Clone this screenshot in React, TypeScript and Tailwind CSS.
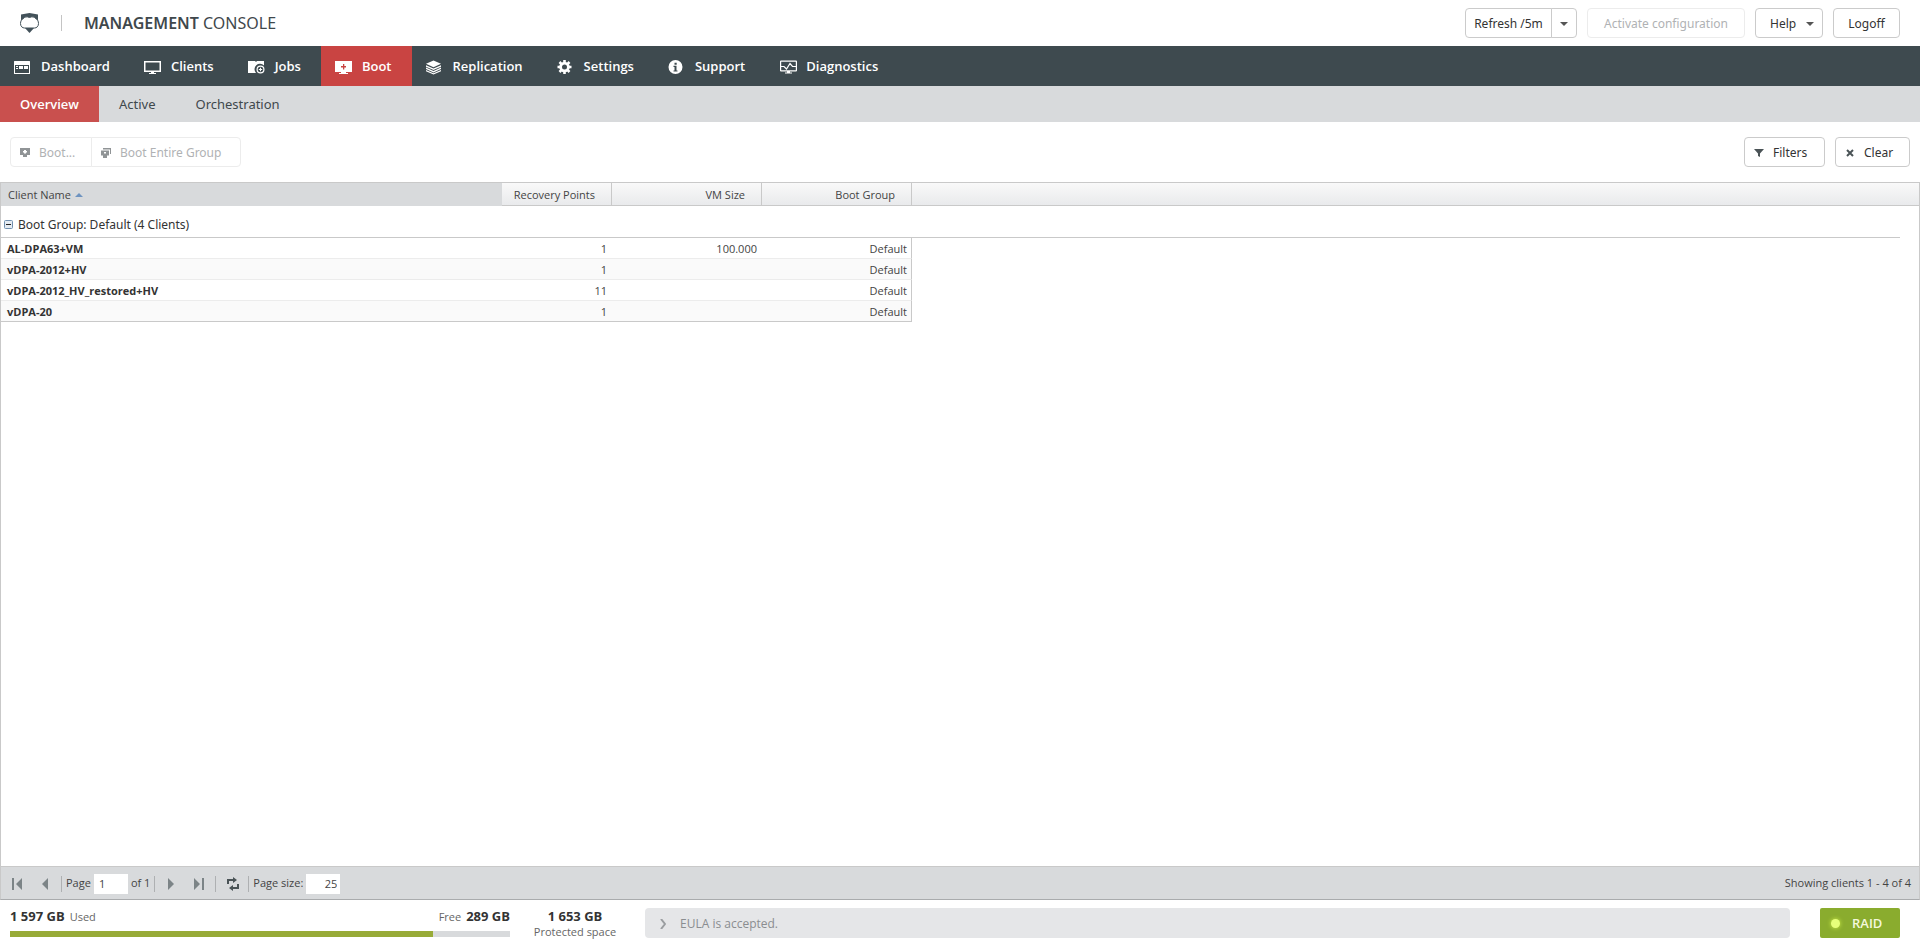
import React from 'react';

interface IconProps {
  children: React.ReactNode;
  w?: number;
  h?: number;
}

const Icon: React.FC<IconProps> = ({ children, w = 18, h = 16 }) => (
  <svg width={w} height={h} viewBox={`0 0 ${w} ${h}`} fill="currentColor" aria-hidden="true" className="shrink-0">
    {children}
  </svg>
);

const DashboardIcon = () => (
  <Icon>
    <path fillRule="evenodd" d="M.5 2h15q.5 0 .5.500V14.500q0 .5-.5.500H.5q-.5 0-.5-.500V2.500Q0 2 .5 2zM1 6v8h14V6zM2 7h2v1H2zM2 9h2v1H2zM5 7h4v3H5zM10 7h4v3h-4z" />
  </Icon>
);

const ClientsIcon = () => (
  <Icon>
    <path fillRule="evenodd" d="M0 2h17v11H0zM1.500 3.500v8h14v-8z" />
    <path d="M7 13h3v1h2v1H5v-1h2z" />
  </Icon>
);

const JobsIcon = () => (
  <Icon>
    <path d="M0 2h7l1 1 1-1h7v4.500a4.800 4.800 0 0 0-8 7.500H0z" />
    <path fillRule="evenodd" d="M12.500 6.500a4 4 0 1 1 0 8a4 4 0 0 1 0-8zm0 1.200a2.800 2.800 0 1 0 0 5.600a2.800 2.800 0 0 0 0-5.600z" />
    <path d="M12 8.800h1v1.200h1.200v1H13v1.200h-1v-1.200h-1.200v-1H12z" />
  </Icon>
);

const BootIcon = () => (
  <Icon>
    <path fillRule="evenodd" d="M0 2h17v11h-6v1h2v1H4v-1h2v-1H0zM8 5v2H6v1.500h2v2h1.300v-2H11V7H9.300V5z" />
  </Icon>
);

const ReplicationIcon = () => (
  <Icon>
    <path d="M7.500 1.500l7.500 3.300-7.500 3.400L0 4.800z" />
    <path d="M0 6.200l7.500 3.400L15 6.200v1.500l-7.500 3.400L0 7.700z" />
    <path d="M0 8.600L7.500 12 15 8.600v1.500l-7.500 3.400L0 10.100z" />
    <path d="M0 11l7.500 3.300L15 11v1.200l-7.500 3.400L0 12.200z" />
  </Icon>
);

const SettingsIcon = () => (
  <Icon>
    <circle cx="7.500" cy="8" r="3.900" fill="none" stroke="currentColor" strokeWidth="2.800" />
    <path stroke="currentColor" strokeWidth="2.600" d="M7.500 1v2.500M7.500 12.500V15M.5 8H3M12 8h2.500M2.500 3l1.800 1.800M10.700 11.200l1.800 1.800M12.500 3l-1.800 1.800M4.300 11.200L2.500 13" />
  </Icon>
);

const SupportIcon = () => (
  <Icon>
    <path fillRule="evenodd" d="M7.500 1a7 7 0 1 1 0 14a7 7 0 0 1 0-14zM6.500 3.700v2h2.200v-2zM5.500 6.800V8h1v3.500h-1v1h4v-1h-1V6.800z" />
  </Icon>
);

const DiagnosticsIcon = () => (
  <Icon>
    <path fillRule="evenodd" d="M2 1.500h15q1 0 1 1v9q0 1-1 1H2q-1 0-1-1v-9q0-1 1-1zM2.200 2.700v8.600h14.600V2.700z" />
    <path d="M8 12h3v1.500h2v1H6v-1h2z" />
    <path d="M2 7.500h3L7.500 10 11 4.500 13.500 7.500H17" fill="none" stroke="currentColor" strokeWidth="1.200" />
  </Icon>
);

const NAV = [
  { label: 'Dashboard', icon: DashboardIcon },
  { label: 'Clients', icon: ClientsIcon },
  { label: 'Jobs', icon: JobsIcon },
  { label: 'Boot', icon: BootIcon, active: true },
  { label: 'Replication', icon: ReplicationIcon },
  { label: 'Settings', icon: SettingsIcon },
  { label: 'Support', icon: SupportIcon },
  { label: 'Diagnostics', icon: DiagnosticsIcon },
];

const TABS = [{ label: 'Overview', active: true }, { label: 'Active' }, { label: 'Orchestration' }];

const CLIENTS = [
  { name: 'AL-DPA63+VM', points: 1, size: '100.000', group: 'Default' },
  { name: 'vDPA-2012+HV', points: 1, size: '', group: 'Default' },
  { name: 'vDPA-2012_HV_restored+HV', points: 11, size: '', group: 'Default' },
  { name: 'vDPA-20', points: 1, size: '', group: 'Default' },
];

const BTN = "flex h-[30px] items-center border border-[#cbcbcb] bg-white pt-px font-['Noto_Sans',sans-serif] text-[12px] text-[#333]";
const BTN_OFF = "flex h-[30px] items-center border border-[#ececec] bg-white pt-px font-['Noto_Sans',sans-serif] text-[12px] text-[#b0b2b4]";

const CaretDown = () => (
  <Icon w={8} h={4}>
    <path fill="#555" d="M0 0h8L4 4z" />
  </Icon>
);

const Header = () => (
  <header className="flex h-[46px] items-center px-5">
    <svg width="19" height="20" viewBox="0 0 19 20" aria-hidden="true">
      <path d="M1 1.500L9.500 0 18 1.500V8H1z" fill="#43525a" />
      <path d="M4.500 14.500h10L9.500 20z" fill="#43525a" />
      <path d="M3.500 5.500C4.500 3.800 7 3.300 9.500 4.500C12 3.300 14.500 3.800 15.500 5.500C17.500 6 18.500 8.500 18.500 10.500C18.500 13.500 16.500 15 14.500 15H4.500C2.500 15 .5 13.500 .5 10.500C.5 8.500 1.500 6 3.500 5.500z" fill="#fff" stroke="#43525a" />
    </svg>
    <div className="mx-[22px] h-4 w-px bg-[#c4c4c4]" />
    <h1 className="font-['Noto_Sans',sans-serif] text-[16px] text-[#3f484c]">
      <span className="font-semibold">MANAGEMENT</span> CONSOLE
    </h1>
    <div className="ml-auto flex gap-[10px]">
      <div className="flex">
        <button className={`${BTN} w-[87px] justify-center rounded-l`}>Refresh /5m</button>
        <button aria-label="Refresh interval" className={`${BTN} -ml-px w-[26px] justify-center rounded-r`}>
          <CaretDown />
        </button>
      </div>
      <button disabled className={`${BTN_OFF} w-[158px] justify-center rounded`}>Activate configuration</button>
      <button className={`${BTN} w-[68px] gap-[10px] rounded pl-[14px]`}>
        Help
        <CaretDown />
      </button>
      <button className={`${BTN} w-[67px] justify-center rounded`}>Logoff</button>
    </div>
  </header>
);

const Toolbar = () => (
  <div className="flex justify-between px-[10px] py-[15px]">
    <div className="flex">
      <button disabled className={`${BTN_OFF} w-[82px] gap-[9px] rounded-l pl-[9px]`}>
        <Icon w={10} h={9}>
          <path fillRule="evenodd" fill="#909496" d="M0 0h10v7H7v2H3V7H0zM4 2v1H3v1l2 2 2-2V3H6V2z" />
        </Icon>
        Boot...
      </button>
      <button disabled className={`${BTN_OFF} -ml-px w-[150px] gap-[9px] rounded-r pl-[9px]`}>
        <Icon w={10} h={10}>
          <path fillRule="evenodd" fill="#909496" d="M2 0h8v6H9V1.500H2zM0 2.500h8v5H6V10H2V7.500H0zM3 4v1l1 1 1-1V4z" />
        </Icon>
        Boot Entire Group
      </button>
    </div>
    <div className="flex gap-[10px]">
      <button className={`${BTN} w-[81px] gap-[9px] rounded pl-[9px]`}>
        <Icon w={10} h={8}>
          <path fill="#4a5356" d="M0 0h10L6 4.500V8L4 7V4.500z" />
        </Icon>
        Filters
      </button>
      <button className={`${BTN} w-[75px] gap-[10px] rounded pl-[10px]`}>
        <Icon w={8} h={8}>
          <path stroke="#4a5356" strokeWidth="2" d="M1 1l6 6M7 1L1 7" />
        </Icon>
        Clear
      </button>
    </div>
  </div>
);

const TH = 'border-r border-b border-[#c9c9c9] bg-linear-to-b from-[#f9f9f9] to-[#e9eaec] pt-0.5 pr-4 text-right font-normal';

const ClientGrid = () => (
  <main className="grow border-x border-t border-[#c9c9c9]">
    <table className="w-full table-fixed border-separate border-spacing-0 text-[11px] text-[#444]">
      <colgroup>
        <col className="w-[501px]" />
        <col className="w-[110px]" />
        <col className="w-[150px]" />
        <col className="w-[150px]" />
        <col />
      </colgroup>
      <thead>
        <tr className="h-[23px]">
          <th className="border-b border-[#d8dadc] bg-[#d8dadc] pt-0.5 pl-[7px] text-left font-normal">
            <span className="flex items-center gap-1">
              Client Name
              <Icon w={8} h={4}>
                <path fill="#6e93c0" d="M4 0l4 4H0z" />
              </Icon>
            </span>
          </th>
          <th className={TH}>Recovery Points</th>
          <th className={TH}>VM Size</th>
          <th className={TH}>Boot Group</th>
          <th className="border-b border-[#c9c9c9] bg-linear-to-b from-[#f9f9f9] to-[#e9eaec]" />
        </tr>
      </thead>
      <tbody>
        <tr className="h-8">
          <td colSpan={5} className="pr-[19px]">
            <div className="flex h-8 items-center gap-[5px] border-b border-[#c9c9c9] pt-[6px] pl-[3px] font-['Noto_Sans',sans-serif] text-[12px] text-[#333]">
              <button aria-label="Collapse group">
                <svg width="9" height="9" viewBox="0 0 9 9" className="block">
                  <rect x=".5" y=".5" width="8" height="8" rx="1" fill="#e4ebf2" stroke="#7190b0" />
                  <path d="M2 4.500h5" stroke="#222" />
                </svg>
              </button>
              Boot Group: Default (4 Clients)
            </div>
          </td>
        </tr>
        {CLIENTS.map((c, i) => {
          const line = i === CLIENTS.length - 1 ? 'border-b-[#c9c9c9]' : 'border-b-[#ececec]';
          const fill = i % 2 ? 'bg-[#fafafa]' : 'bg-white';
          return (
            <tr key={c.name} className="h-[21px]">
              <td className={`border-b pt-0.5 pl-[6px] font-bold text-[#333] ${line} ${fill}`}>{c.name}</td>
              <td className={`border-b pt-0.5 pr-[5px] text-right ${line} ${fill}`}>{c.points}</td>
              <td className={`border-b pt-0.5 pr-[5px] text-right ${line} ${fill}`}>{c.size}</td>
              <td className={`border-r border-b border-r-[#c9c9c9] pt-0.5 pr-1 text-right ${line} ${fill}`}>{c.group}</td>
              <td />
            </tr>
          );
        })}
      </tbody>
    </table>
  </main>
);

const Divider = () => <div className="h-4 w-px bg-[#aeb0b2]" />;

const Pager = () => (
  <div className="flex h-[34px] items-center border border-[#c9c9c9] border-b-[#a9abad] bg-[#d8dadc] pt-px pr-2 pl-[11px] text-[11px] text-[#444]">
    <button aria-label="First page" className="text-[#7c8487]">
      <Icon w={11} h={12}>
        <path d="M0 0h2v12H0zM10 0v12L4 6z" />
      </Icon>
    </button>
    <button aria-label="Previous page" className="ml-[19px] text-[#7c8487]">
      <Icon w={6} h={12}>
        <path d="M6 0v12L0 6z" />
      </Icon>
    </button>
    <div className="ml-[13px]">
      <Divider />
    </div>
    <label htmlFor="page" className="ml-1">Page</label>
    <input id="page" defaultValue="1" className="mx-[3px] h-5 w-[34px] bg-white pl-[5px]" />
    <span className="mr-1">of 1</span>
    <Divider />
    <button aria-label="Next page" className="ml-[13px] text-[#7c8487]">
      <Icon w={6} h={12}>
        <path d="M0 0v12l6-6z" />
      </Icon>
    </button>
    <button aria-label="Last page" className="ml-5 text-[#7c8487]">
      <Icon w={11} h={12}>
        <path d="M0 0v12l6-6zM8 0h2v12H8z" />
      </Icon>
    </button>
    <div className="ml-[10px]">
      <Divider />
    </div>
    <button aria-label="Reload" className="mr-[9px] ml-[11px] text-[#4a5356]">
      <Icon w={12} h={14}>
        <path d="M0 7V2h6V0l4 3-4 3V4H2v3zM12 7v5H6v2l-4-3 4-3v2h4V7z" />
      </Icon>
    </button>
    <Divider />
    <label htmlFor="size" className="ml-1">Page size:</label>
    <input id="size" defaultValue="25" className="ml-[3px] h-5 w-[34px] bg-white pr-[3px] text-right" />
    <span className="ml-auto">Showing clients 1 - 4 of 4</span>
  </div>
);

const StatusBar = () => (
  <footer className="flex h-[46px] items-center pr-5 pl-[10px] text-[11px] text-[#666]">
    <div className="w-[500px] pb-1">
      <div className="flex items-center justify-between leading-5">
        <span><b className="mr-[5px] text-[13px] text-[#333]">1 597 GB</b>Used</span>
        <span>Free<b className="ml-[5px] text-[13px] text-[#333]">289 GB</b></span>
      </div>
      <div className="mt-1 h-[6px] bg-[#d8dadc]">
        <div className="h-full w-[423px] bg-[#98ab38]" />
      </div>
    </div>
    <div className="w-[130px] pt-0.5 text-center leading-4">
      <b className="block text-[13px] text-[#333]">1 653 GB</b>
      Protected space
    </div>
    <div className="mr-[30px] ml-[5px] flex h-[30px] grow items-center gap-[14px] rounded bg-[#e5e6e8] pt-px pl-[15px] text-[12px] text-[#8a8d90]">
      <Icon w={6} h={10}>
        <path d="M1 0l4 5-4 5" fill="none" stroke="#9a9da0" strokeWidth="2" />
      </Icon>
      EULA is accepted.
    </div>
    <button className="flex h-[30px] w-20 items-center gap-3 rounded-xs bg-[#8aac2e] pt-px pl-[11px] text-[13px] font-semibold text-[#f4f8dc]">
      <span className="size-[9px] rounded-full bg-[#e6ff7a] shadow-[0_0_4px_#d2f24a]" />
      RAID
    </button>
  </footer>
);

export default function App() {
  return (
    <div className="flex min-h-screen flex-col bg-white font-['Open_Sans',sans-serif]">
      <Header />
      <nav className="flex h-10 bg-[#3e4a4f]">
        {NAV.map(({ label, icon: NavIcon, active }) => (
          <a
            key={label}
            href="#"
            className={`flex items-center gap-[9px] pt-px pr-5 pl-[14px] text-[13px] font-semibold text-white ${active ? 'bg-[#c94442]' : ''}`}
          >
            <NavIcon />
            {label}
          </a>
        ))}
      </nav>
      <nav className="flex h-9 bg-[#d8dadc]">
        {TABS.map(({ label, active }) => (
          <a
            key={label}
            href="#"
            className={`flex items-center px-5 pt-0.5 text-[13px] ${active ? 'bg-[#c9504e] font-semibold text-white' : "font-['Noto_Sans',sans-serif] text-[#3f484c]"}`}
          >
            {label}
          </a>
        ))}
      </nav>
      <Toolbar />
      <ClientGrid />
      <Pager />
      <StatusBar />
    </div>
  );
}
